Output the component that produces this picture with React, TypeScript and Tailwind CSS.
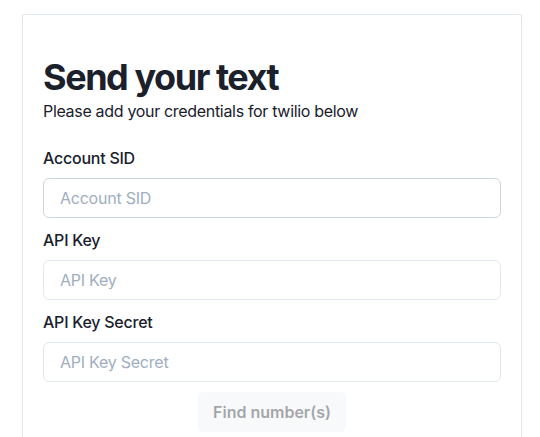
export default function App() {
  const fields = ["Account SID", "API Key", "API Key Secret"];

  return (
    <div className="min-h-screen bg-white font-['Inter',sans-serif] text-[#1a202c]">
      <div className="ml-[22px] mt-[14px] w-[500px] rounded-[2px] border border-[#e2e8f0] bg-white px-5 pt-[41px] pb-8 shadow-[0_1px_3px_rgba(0,0,0,0.06)]">
        <h1 className="text-[36px] font-bold leading-[1.2] tracking-[-0.04em]">
          Send your text
        </h1>
        <p className="text-base leading-6 tracking-[-0.02em]">
          Please add your credentials for twilio below
        </p>

        <form className="mt-[23px] flex flex-col">
          {fields.map((label, i) => (
            <div key={label} className="mb-[10px] flex flex-col">
              <label className="mb-2 text-base font-medium leading-6 tracking-[-0.015em]">
                {label}
              </label>
              <input
                placeholder={label}
                className={`h-10 rounded-md border px-4 text-base tracking-[-0.015em] outline-none placeholder:text-[#a0aec0] ${
                  i === 0 ? "border-[#cbd5e0]" : "border-[#e2e8f0]"
                }`}
              />
            </div>
          ))}
          <div className="flex justify-center">
            <button
              type="button"
              disabled
              className="h-10 w-[148px] rounded-md bg-[#edf2f7] text-base font-semibold text-[#1a202c] opacity-40"
            >
              Find number(s)
            </button>
          </div>
        </form>
      </div>
    </div>
  );
}
